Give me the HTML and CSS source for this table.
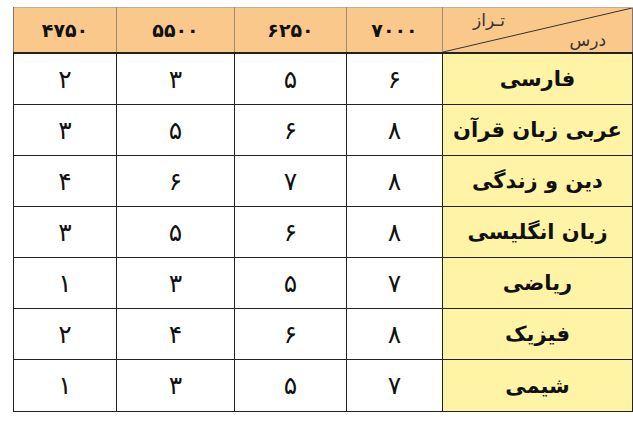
FILE: index.html
```html
<!DOCTYPE html>
<html lang="fa" dir="rtl">
<head>
<meta charset="utf-8">
<link rel="stylesheet" href="styles.css">
</head>
<body>
<table class="grid">
  <colgroup>
    <col class="c-name"><col class="c-a"><col class="c-b"><col class="c-c"><col class="c-d">
  </colgroup>
  <thead>
    <tr>
      <th class="diag">
        <svg class="diag-line" viewBox="0 0 100 100" preserveAspectRatio="none"><line x1="0" y1="100" x2="100" y2="0" stroke="#333" stroke-width="1" vector-effect="non-scaling-stroke"/></svg>
        <span class="lbl-top">تـراز</span>
        <span class="lbl-bot">درس</span>
      </th>
      <th>۷۰۰۰</th><th>۶۲۵۰</th><th>۵۵۰۰</th><th>۴۷۵۰</th>
    </tr>
  </thead>
  <tbody>
    <tr><td class="name">فارسی</td><td>۶</td><td>۵</td><td>۳</td><td>۲</td></tr>
    <tr><td class="name">عربی زبان قرآن</td><td>۸</td><td>۶</td><td>۵</td><td>۳</td></tr>
    <tr><td class="name">دین و زندگی</td><td>۸</td><td>۷</td><td>۶</td><td>۴</td></tr>
    <tr><td class="name">زبان انگلیسی</td><td>۸</td><td>۶</td><td>۵</td><td>۳</td></tr>
    <tr><td class="name">ریاضی</td><td>۷</td><td>۵</td><td>۳</td><td>۱</td></tr>
    <tr><td class="name">فیزیک</td><td>۸</td><td>۶</td><td>۴</td><td>۲</td></tr>
    <tr><td class="name">شیمی</td><td>۷</td><td>۵</td><td>۳</td><td>۱</td></tr>
  </tbody>
</table>
</body>
</html>
```
FILE: styles.css
```css
html, body {
  margin: 0;
  padding: 0;
  background: #ffffff;
}
body {
  padding: 7px 0 0 9px;
  font-family: "DejaVu Sans", "Noto Sans", sans-serif;
  color: #111;
}
.grid {
  border-collapse: collapse;
  table-layout: fixed;
  width: 619px;
  direction: rtl;
}
.c-name { width: 190px; }
.c-a { width: 96px; }
.c-b { width: 112px; }
.c-c { width: 118px; }
.c-d { width: 103px; }

.grid th {
  background: #fbc88c;
  height: 44px;
  padding: 0;
  font-weight: bold;
  font-size: 19px;
  text-align: center;
  border-left: 1px solid #9a8a78;
  border-right: 1px solid #9a8a78;
  border-top: 1px solid #bcb0a0;
  border-bottom: 2px solid #222;
}
.grid th:first-child { border-right: 1px solid #777; }
.grid th:last-child { border-left: 1px solid #777; }

.grid td {
  height: 50px;
  padding: 0;
  text-align: center;
  font-size: 25px;
  border: 1px solid #222;
  background: #fff;
}
.grid tbody tr:last-child td { height: 51px; }
.grid td.name {
  background: #fff3a6;
  font-weight: bold;
  font-size: 21px;
}

.diag {
  position: relative;
}
.diag-line {
  position: absolute;
  left: 0;
  top: 0;
  width: 100%;
  height: 100%;
}
.lbl-top, .lbl-bot {
  position: absolute;
  font-weight: normal;
  font-size: 17px;
  color: #333;
}
.lbl-top { left: 30px; top: 2px; }
.lbl-bot { right: 26px; bottom: 2px; }
```
